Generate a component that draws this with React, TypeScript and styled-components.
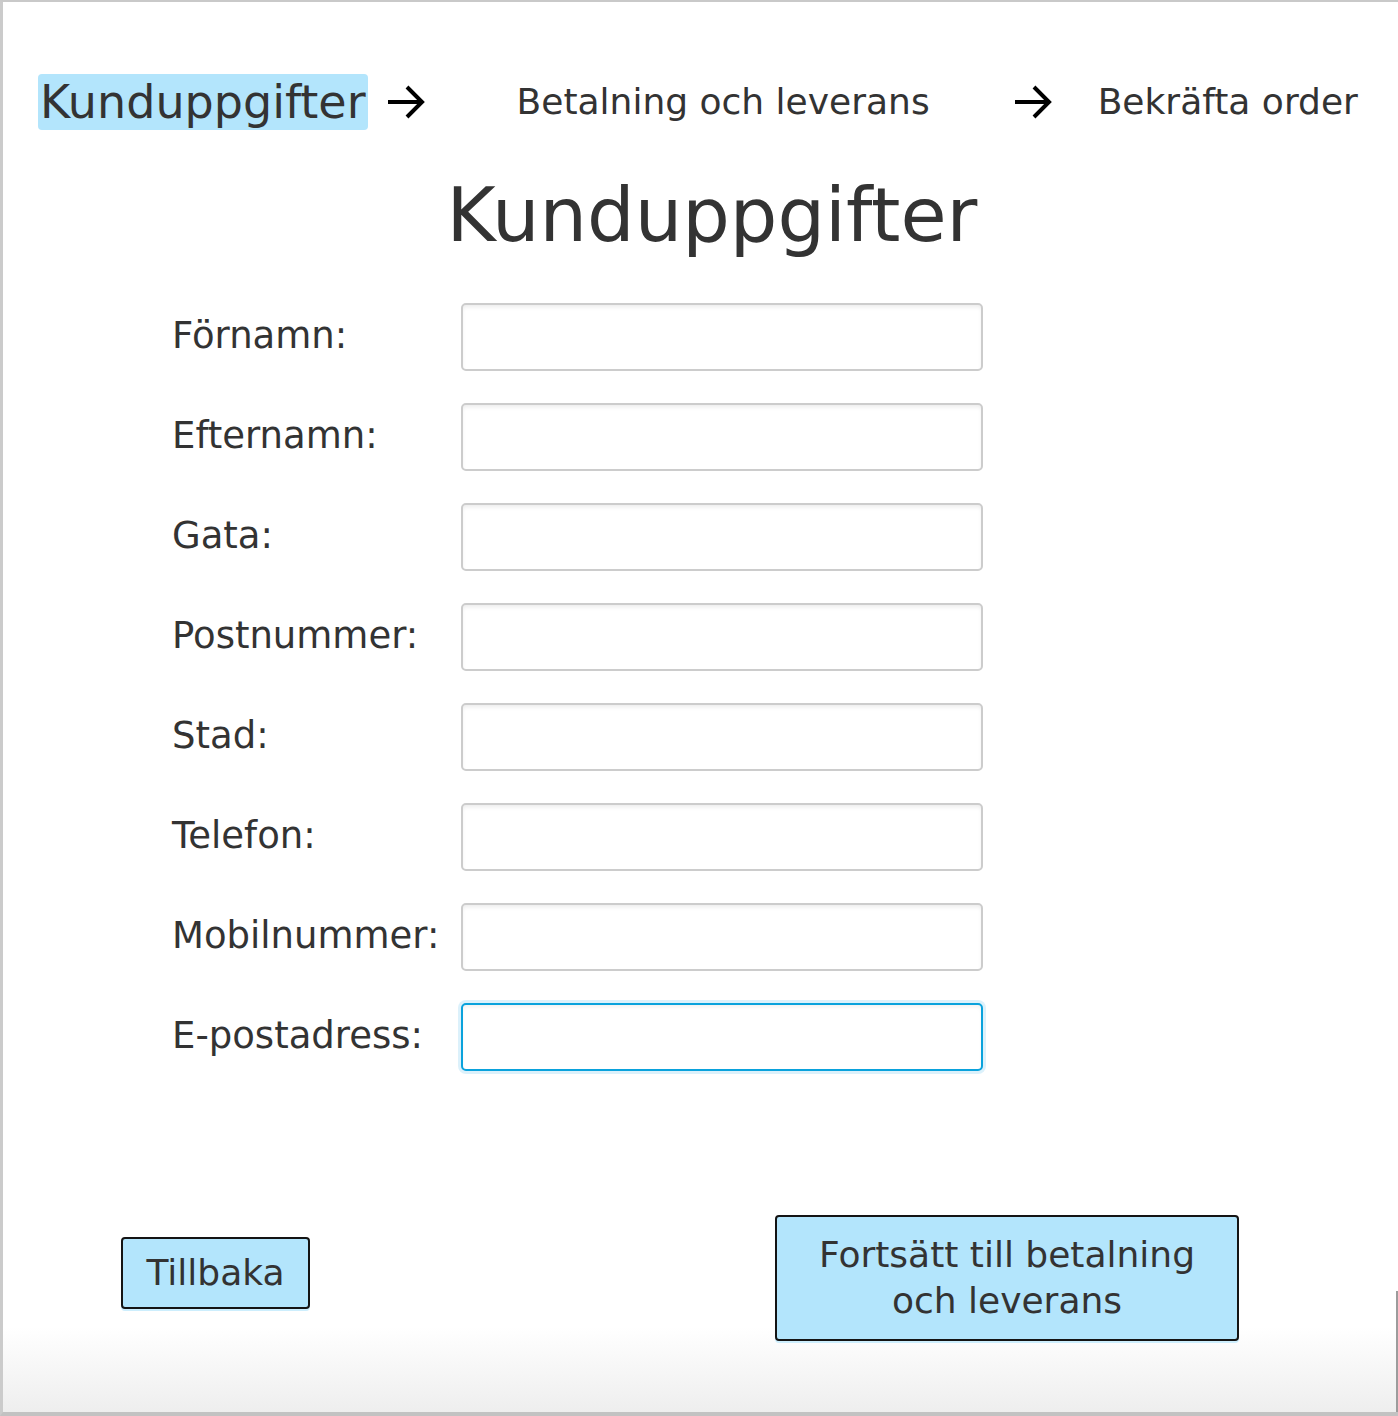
import React from "react";
import styled, { createGlobalStyle } from "styled-components";

const GlobalStyle = createGlobalStyle`
  html, body {
    margin: 0;
    padding: 0;
    background: #ffffff;
  }
  body {
    font-family: "DejaVu Sans", "Noto Sans", sans-serif;
    color: #333333;
  }
  * { box-sizing: border-box; }
`;

const Frame = styled.div`
  position: relative;
  width: 1398px;
  height: 1416px;
  border-top: 2px solid #c9c9c9;
  border-left: 3px solid #cbcbcb;
  border-bottom: 4px solid #c2c2c2;
  background: linear-gradient(to bottom, #ffffff 0, #ffffff 1325px, #eeeeee 100%);
  display: flex;
  flex-direction: column;
`;

const ScrollEdge = styled.div`
  position: absolute;
  right: 0;
  bottom: 0;
  width: 2px;
  height: 121px;
  background: #9c9c9c;
`;

const Steps = styled.nav`
  display: flex;
  align-items: center;
  padding-top: 72px;
  padding-left: 35px;
`;

const ActiveStep = styled.span`
  display: inline-block;
  height: 56px;
  line-height: 56px;
  padding: 0 2px;
  border-radius: 4px;
  background: #b3e5fc;
  font-size: 46px;
  color: #333333;
  white-space: nowrap;
`;

const Step = styled.span<{ $ml: number }>`
  display: inline-block;
  margin-left: ${(p) => p.$ml}px;
  height: 56px;
  line-height: 55px;
  font-size: 36px;
  color: #333333;
  white-space: nowrap;
`;

const ArrowBox = styled.span<{ $ml: number }>`
  display: inline-flex;
  margin-left: ${(p) => p.$ml}px;
  width: 38px;
  height: 36px;
`;

const Arrow = ({ ml }: { ml: number }) => (
  <ArrowBox $ml={ml}>
    <svg width="38" height="36" viewBox="0 0 38 36" fill="none">
      <path
        d="M1 18 H35 M20 3 L35 18 L20 33"
        stroke="#000"
        strokeWidth="4"
        strokeLinejoin="miter"
      />
    </svg>
  </ArrowBox>
);

const Heading = styled.h1`
  margin: 35px 0 0;
  padding-left: 23px;
  font-size: 75px;
  line-height: 100px;
  font-weight: 400;
  text-align: center;
  color: #333333;
`;

const Form = styled.form`
  display: grid;
  grid-template-columns: 290px 522px;
  row-gap: 32px;
  align-items: center;
  margin-top: 38px;
  padding-left: 168px;
`;

const Label = styled.label`
  font-size: 37px;
  line-height: 44px;
  padding-bottom: 2px;
  padding-left: 1px;
  color: #333333;
  white-space: nowrap;
`;

const Input = styled.input<{ $focused?: boolean }>`
  width: 522px;
  height: 68px;
  border-radius: 5px;
  border: 2px solid ${(p) => (p.$focused ? "#0aa2dc" : "#cccccc")};
  background: #ffffff;
  box-shadow: ${(p) =>
    p.$focused
      ? "0 0 0 3px #dcf1fb, inset 0 3px 4px -1px rgba(0,0,0,0.06)"
      : "inset 0 3px 4px -1px rgba(0,0,0,0.08)"};
  outline: none;
  font-size: 24px;
  padding: 0 10px;
`;

const Actions = styled.div`
  display: flex;
  align-items: flex-start;
  margin-top: 144px;
  padding-left: 118px;
`;

const Button = styled.button<{ $w: number; $h: number; $mt?: number; $ml?: number }>`
  width: ${(p) => p.$w}px;
  height: ${(p) => p.$h}px;
  margin-top: ${(p) => p.$mt ?? 0}px;
  margin-left: ${(p) => p.$ml ?? 0}px;
  background: #b3e5fc;
  border: 2px solid #141414;
  border-radius: 4px;
  box-shadow: 0 2px 0 #cdeefd;
  font-family: inherit;
  font-size: 36px;
  line-height: 46px;
  color: #333333;
  padding: 0;
  cursor: pointer;
`;

const fields = [
  "Förnamn:",
  "Efternamn:",
  "Gata:",
  "Postnummer:",
  "Stad:",
  "Telefon:",
  "Mobilnummer:",
  "E-postadress:",
];

export default function App() {
  return (
    <>
      <GlobalStyle />
      <Frame>
        <Steps>
          <ActiveStep>Kunduppgifter</ActiveStep>
          <Arrow ml={19} />
          <Step $ml={92}>Betalning och leverans</Step>
          <Arrow ml={84} />
          <Step $ml={46}>Bekräfta order</Step>
        </Steps>
        <Heading>Kunduppgifter</Heading>
        <Form onSubmit={(e) => e.preventDefault()}>
          {fields.map((f, i) => (
            <React.Fragment key={f}>
              <Label htmlFor={`f${i}`}>{f}</Label>
              <Input id={`f${i}`} $focused={i === fields.length - 1} />
            </React.Fragment>
          ))}
        </Form>
        <Actions>
          <Button $w={189} $h={72} $mt={22}>
            Tillbaka
          </Button>
          <Button $w={464} $h={126} $ml={465}>
            Fortsätt till betalning
            <br />
            och leverans
          </Button>
        </Actions>
        <ScrollEdge />
      </Frame>
    </>
  );
}
